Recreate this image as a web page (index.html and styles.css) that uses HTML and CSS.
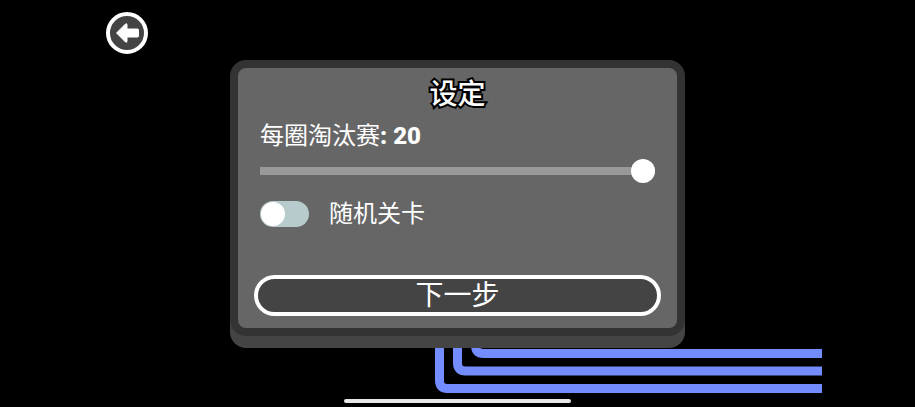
FILE: index.html
```html
<!DOCTYPE html>
<html lang="zh-CN">
<head>
  <meta charset="UTF-8">
  <meta name="viewport" content="width=device-width, initial-scale=1">
  <title>设定</title>
  <link rel="stylesheet" href="styles.css">
</head>
<body>
  <header>
    <button class="back-btn" type="button" aria-label="返回">
      <svg width="24" height="22" viewBox="0 0 24 22">
        <path d="M1.5 11 L10.5 2 Q12 1 12 3 V7 H22.5 Q23.5 7 23.5 8 V14 Q23.5 15 22.5 15 H12 V19 Q12 21 10.5 20 Z" fill="#fff" stroke="#fff" stroke-width="1" stroke-linejoin="round"/>
      </svg>
    </button>
  </header>

  <main>
    <!-- 背景赛道 -->
    <svg class="track" width="387" height="64" viewBox="0 0 387 64">
      <g fill="none" stroke="#738cff" stroke-width="9">
        <path d="M40.5 0 V15.5 Q40.5 23.5 48.5 23.5 H387"/>
        <path d="M22.5 0 V33 Q22.5 41 30.5 41 H387"/>
        <path d="M4.5 0 V50.5 Q4.5 58.5 12.5 58.5 H387"/>
      </g>
    </svg>

    <form class="panel">
      <h1>设定</h1>
      <div class="field">
        <label for="rounds">每圈淘汰赛<output id="roundsValue" for="rounds">: 20</output></label>
        <input class="slider" type="range" id="rounds" min="1" max="20" value="20">
      </div>
      <div class="switch-row">
        <input class="switch" type="checkbox" id="random">
        <label for="random">随机关卡</label>
      </div>
      <button class="next-btn" type="button">下一步</button>
    </form>
  </main>

  <div class="home-bar"></div>

  <script>
    const rounds = document.getElementById("rounds");

    rounds.addEventListener("input", () => {
      document.getElementById("roundsValue").textContent = ": " + rounds.value;
    });
  </script>
</body>
</html>
```
FILE: styles.css
```css
* {
  box-sizing: border-box;
}

body {
  min-height: 100vh;
  margin: 0;
  background-color: #000;
  color: #fff;
  font-family: Roboto, "Noto Sans CJK SC", sans-serif;
  font-size: 24px;
  line-height: 32px;
}

header {
  padding: 12px 106px 6px;
}

button {
  background-color: #444;
  border: 4px solid #fff;
  color: #fff;
  font-family: inherit;
  cursor: pointer;
}

.back-btn {
  display: flex;
  align-items: center;
  justify-content: center;
  width: 42px;
  height: 42px;
  padding: 0;
  border-radius: 50%;
}

main {
  position: relative;
  max-width: 455px;
  margin: 0 auto;
  padding-bottom: 12px;
}

.track {
  position: absolute;
  left: 205px;
  bottom: -46px;
}

.panel {
  position: relative;
  padding: 9px 16px 12px;
  border: 8px solid #333;
  border-radius: 16px;
  background-color: #666;
  box-shadow: 0 12px 0 #444;
}

h1 {
  margin: 0 0 7px;
  font-size: 28px;
  font-weight: 500;
  line-height: 36px;
  text-align: center;
  -webkit-text-stroke: 4px #000;
  paint-order: stroke fill;
}

.field {
  display: flex;
  flex-direction: column;
  gap: 7px;
  padding: 0 6px;
}

output {
  font-weight: 900;
}

.slider {
  appearance: none;
  width: 100%;
  height: 24px;
  margin: 0;
  background: none;
  cursor: pointer;
}

.slider::-webkit-slider-runnable-track {
  height: 8px;
  background-color: #999;
}

.slider::-webkit-slider-thumb {
  appearance: none;
  width: 24px;
  height: 24px;
  margin-top: -8px;
  border-radius: 50%;
  background-color: #fff;
}

.switch-row {
  display: flex;
  align-items: center;
  gap: 20px;
  margin: 15px 0 45px;
  padding: 0 6px;
}

.switch {
  appearance: none;
  display: flex;
  align-items: center;
  width: 49px;
  height: 26px;
  margin: 0;
  padding: 0 1px;
  border-radius: 13px;
  background-color: #b8cbcc;
  cursor: pointer;
}

.switch::before {
  content: "";
  width: 24px;
  height: 24px;
  border-radius: 50%;
  background-color: #fff;
}

.switch:checked {
  justify-content: flex-end;
  background-color: #738cff;
}

.next-btn {
  display: block;
  width: 100%;
  height: 41px;
  padding: 0;
  border-radius: 21px;
  font-size: 28px;
  line-height: 32px;
}

.home-bar {
  position: fixed;
  bottom: 4px;
  left: 0;
  right: 0;
  width: 227px;
  height: 4px;
  margin: 0 auto;
  border-radius: 2px;
  background-color: #e8e8e8;
}
```
